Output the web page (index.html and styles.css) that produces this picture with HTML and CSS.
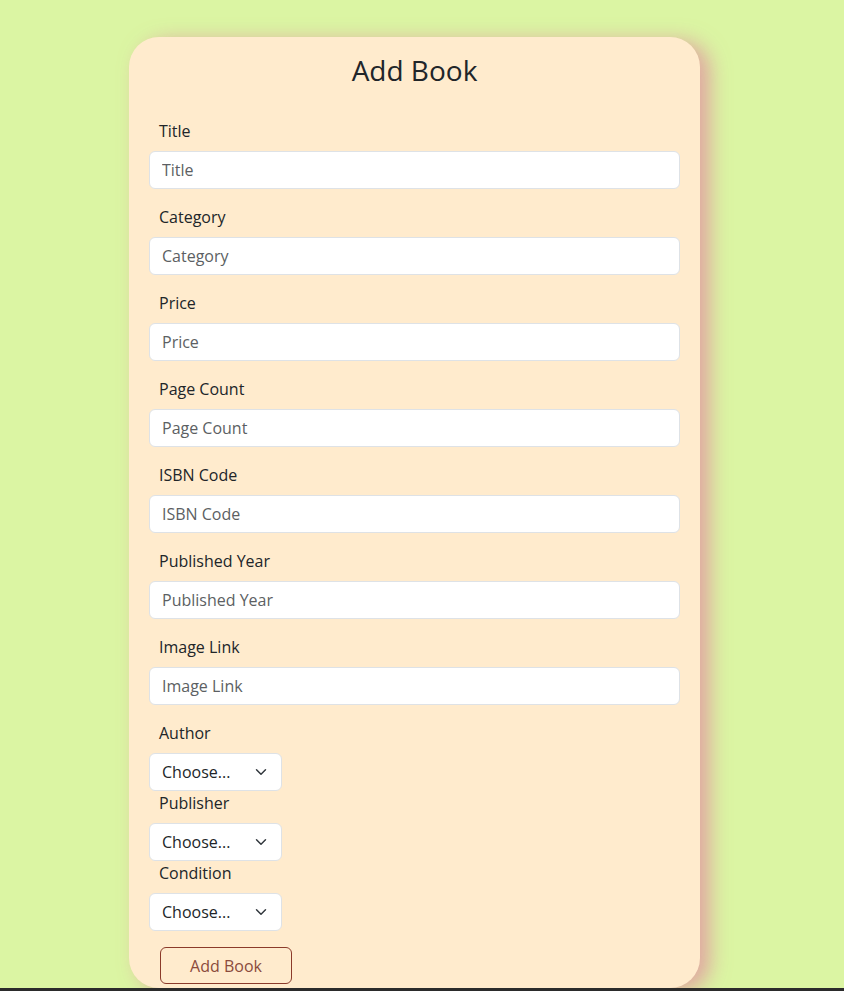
FILE: index.html
```html
<!DOCTYPE html>
<html lang="en">
<head>
<meta charset="utf-8">
<title>Add Book</title>
<link rel="stylesheet" href="styles.css">
</head>
<body>
<main class="page">
  <form class="card">
    <h2 class="card-title">Add Book</h2>
    <div class="field">
      <label class="label">Title</label>
      <input class="input" type="text" placeholder="Title">
    </div>
    <div class="field">
      <label class="label">Category</label>
      <input class="input" type="text" placeholder="Category">
    </div>
    <div class="field">
      <label class="label">Price</label>
      <input class="input" type="text" placeholder="Price">
    </div>
    <div class="field">
      <label class="label">Page Count</label>
      <input class="input" type="text" placeholder="Page Count">
    </div>
    <div class="field">
      <label class="label">ISBN Code</label>
      <input class="input" type="text" placeholder="ISBN Code">
    </div>
    <div class="field">
      <label class="label">Published Year</label>
      <input class="input" type="text" placeholder="Published Year">
    </div>
    <div class="field">
      <label class="label">Image Link</label>
      <input class="input" type="text" placeholder="Image Link">
    </div>
    <div class="field select-field">
      <label class="label">Author</label>
      <select class="select"><option>Choose...</option></select>
    </div>
    <div class="field select-field">
      <label class="label">Publisher</label>
      <select class="select"><option>Choose...</option></select>
    </div>
    <div class="field select-field">
      <label class="label">Condition</label>
      <select class="select"><option>Choose...</option></select>
    </div>
    <button class="submit" type="button">Add Book</button>
  </form>
</main>
<footer class="footer"></footer>
</body>
</html>
```

FILE: styles.css
```css
* { box-sizing: border-box; }
html, body { margin: 0; padding: 0; }
body {
  background: #dbf5a3;
  font-family: "Comic Sans MS", "Open Sans", sans-serif;
  color: #212529;
  font-size: 16px;
  line-height: 1.5;
}
.page {
  padding: 37px 0 0 129px;
}
.card {
  width: 571px;
  background: #ffebcd;
  border-radius: 30px;
  padding: 16px 20px 4px 20px;
  box-shadow: 10px 4px 20px rgba(225, 140, 160, 0.75);
  display: flex;
  flex-direction: column;
}
.card-title {
  margin: 0 0 32px 0;
  text-align: center;
  font-size: 28px;
  font-weight: 400;
  line-height: 34px;
}
.field {
  display: flex;
  flex-direction: column;
  gap: 8px;
  margin-bottom: 16px;
}
.select-field { margin-bottom: 0; align-items: flex-start; }
.label {
  padding-left: 10px;
  font-size: 16px;
  line-height: 24px;
}
.input {
  width: 100%;
  height: 38px;
  padding: 6px 12px;
  font: inherit;
  color: #212529;
  background: #fff;
  border: 1px solid #dee2e6;
  border-radius: 6px;
}
.input::placeholder { color: #5c5f63; }
.select {
  height: 38px;
  width: 133px;
  padding: 6px 36px 6px 12px;
  font: inherit;
  color: #212529;
  background-color: #fff;
  background-image: url("data:image/svg+xml,%3csvg xmlns='http://www.w3.org/2000/svg' viewBox='0 0 16 16'%3e%3cpath fill='none' stroke='%23343a40' stroke-linecap='round' stroke-linejoin='round' stroke-width='2' d='m2 5 6 6 6-6'/%3e%3c/svg%3e");
  background-repeat: no-repeat;
  background-position: right 12px center;
  background-size: 16px 12px;
  border: 1px solid #dee2e6;
  border-radius: 6px;
  appearance: none;
  -webkit-appearance: none;
}
.submit {
  align-self: flex-start;
  margin: 16px 0 0 11px;
  width: 132px;
  height: 37px;
  font: inherit;
  color: #8b4a3c;
  background: transparent;
  border: 1px solid #8b3a2a;
  border-radius: 6px;
}
.footer {
  height: 40px;
  background: #2b2b2b;
}
```
